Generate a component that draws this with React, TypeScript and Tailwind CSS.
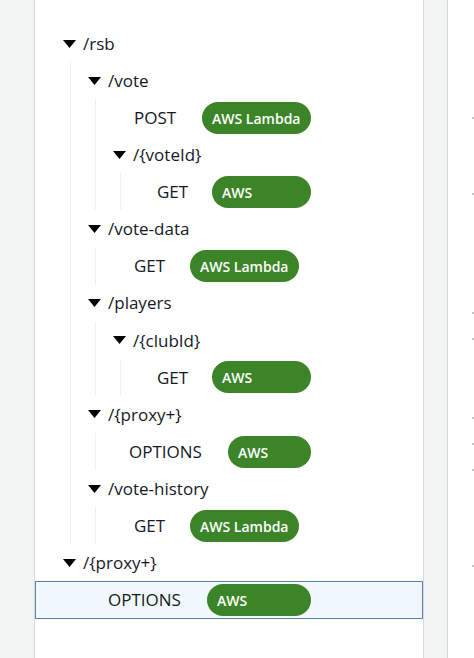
type MethodRow = {
  kind: 'method';
  method: string;
  pl: string;
  mw: string;
  bw: string;
  selected?: boolean;
};

type ResourceRow = {
  kind: 'resource';
  label: string;
  children: TreeNode[];
};

type TreeNode = MethodRow | ResourceRow;

const tree: TreeNode[] = [
  {
    kind: 'resource',
    label: '/rsb',
    children: [
      {
        kind: 'resource',
        label: '/vote',
        children: [
          { kind: 'method', method: 'POST', pl: 'pl-[38px]', mw: 'w-[68px]', bw: 'w-[109px]' },
          {
            kind: 'resource',
            label: '/{voteId}',
            children: [{ kind: 'method', method: 'GET', pl: 'pl-[36px]', mw: 'w-[55px]', bw: 'w-[99px]' }],
          },
        ],
      },
      {
        kind: 'resource',
        label: '/vote-data',
        children: [{ kind: 'method', method: 'GET', pl: 'pl-[38px]', mw: 'w-[56px]', bw: 'w-[109px]' }],
      },
      {
        kind: 'resource',
        label: '/players',
        children: [
          {
            kind: 'resource',
            label: '/{clubId}',
            children: [{ kind: 'method', method: 'GET', pl: 'pl-[36px]', mw: 'w-[55px]', bw: 'w-[99px]' }],
          },
        ],
      },
      {
        kind: 'resource',
        label: '/{proxy+}',
        children: [{ kind: 'method', method: 'OPTIONS', pl: 'pl-[33px]', mw: 'w-[99px]', bw: 'w-[83px]' }],
      },
      {
        kind: 'resource',
        label: '/vote-history',
        children: [{ kind: 'method', method: 'GET', pl: 'pl-[38px]', mw: 'w-[56px]', bw: 'w-[109px]' }],
      },
    ],
  },
  {
    kind: 'resource',
    label: '/{proxy+}',
    children: [
      { kind: 'method', method: 'OPTIONS', pl: 'pl-[72px]', mw: 'w-[99px]', bw: 'w-[104px]', selected: true },
    ],
  },
];

// faint markers in the column on the far right
const ticks = ['mt-[117px]', 'mt-[74px]', 'mt-[117px]', 'mt-[24px]', 'mt-[77px]', 'mt-[24px]', 'mt-[24px]', 'mt-[94px]'];

function Caret() {
  return (
    <svg width="13" height="8" viewBox="0 0 13 8" className="shrink-0">
      <polygon points="0,0 13,0 6.5,8" fill="#000" />
    </svg>
  );
}

function Node({ node }: { node: TreeNode }) {
  if (node.kind === 'method') {
    return (
      <div
        className={
          node.selected
            ? `-ml-[36px] w-[388px] h-[37.1px] flex items-center border border-[#5b80b2] bg-[#f1f9fe] ${node.pl}`
            : `h-[37.1px] flex items-center ${node.pl}`
        }
      >
        <span className={`${node.mw} shrink-0 text-[17px] text-[#16191f]`}>{node.method}</span>
        <div
          className={`${node.bw} shrink-0 h-[32px] rounded-full bg-[#3b8427] pl-[10px] pr-[6px] pt-[4px] text-[14px] leading-[25px] font-semibold text-white`}
        >
          AWS Lambda
        </div>
      </div>
    );
  }

  return (
    <div>
      <div className="h-[37.1px] flex items-center pl-[17px]">
        <Caret />
        <span className="ml-[7px] text-[17px] text-[#16191f]">{node.label}</span>
      </div>
      <div className="ml-[24px] border-l border-[#f0f1f1]">
        {node.children.map((child, i) => (
          <Node key={i} node={child} />
        ))}
      </div>
    </div>
  );
}

export default function App() {
  return (
    <div className="w-[474px] h-[658px] flex bg-white overflow-hidden font-['Open_Sans',sans-serif]">
      {/* Left gutter */}
      <div className="w-[34px] shrink-0 bg-[#f2f3f3]" />

      {/* Resource tree panel */}
      <div className="w-[390px] shrink-0 border-l border-r border-[#d5dbdb] bg-white pt-[25px] pl-[11px]">
        {tree.map((node, i) => (
          <Node key={i} node={node} />
        ))}
      </div>

      {/* Divider strip */}
      <div className="w-[24px] shrink-0 bg-[#f2f3f3] border-r border-[#d5dbdb]" />

      {/* Right content edge */}
      <div className="flex-1 flex flex-col items-end">
        {ticks.map((mt, i) => (
          <div key={i} className={`${mt} w-[2px] h-[2px] bg-[#c4c4c4]`} />
        ))}
      </div>
    </div>
  );
}
